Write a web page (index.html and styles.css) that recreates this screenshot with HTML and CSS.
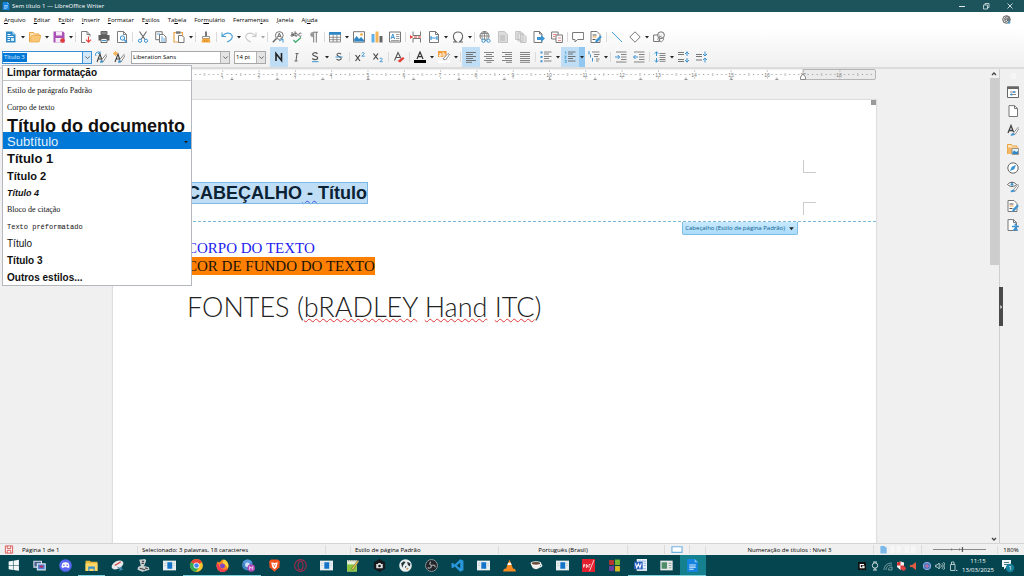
FILE: index.html
```html
<!DOCTYPE html>
<html lang="pt-BR">
<head>
<meta charset="utf-8">
<title>Sem título 1 — LibreOffice Writer</title>
<link rel="stylesheet" href="styles.css">
</head>
<body>
<svg class="sprite" aria-hidden="true">
  <symbol id="caret" viewBox="0 0 6 6"><path d="M1 2h4L3 4.4z" fill="#222"/></symbol>
  <symbol id="chev" viewBox="0 0 8 8"><path d="M1.500 2.800L4 5.300l2.500-2.500" fill="none" stroke="#555" stroke-width="1"/></symbol>
  <symbol id="new" viewBox="0 0 12 12"><path d="M1 .5h6.500L10.500 3.500v8H1z" fill="#2d8bc9"/><path d="M7.500.5v3h3z" fill="#a9d6f2"/><path d="M2.500 3.500h3M2.500 5.500h6M2.500 7.500h2.500M2.500 9.500h2.500" stroke="#fff"/><path d="M6 7h3v3H6z" fill="#d6ecf9"/></symbol>
  <symbol id="open" viewBox="0 0 12 12"><path d="M.5 10.500v-9h4l1 1.500h4.500v2" fill="#fbe3bd" stroke="#e8a33d"/><path d="M2.500 4.500h9.500l-2 6.500H.5z" fill="#f9c777" stroke="#e8a33d" stroke-width=".7"/></symbol>
  <symbol id="save" viewBox="0 0 12 12"><path d="M.5 .5h9.500l1.500 1.500v9.500H.5z" fill="#a850b5"/><path d="M3 .5h6v4H3zM2.500 7h7v4.500h-7z" fill="#f7eaf8"/><circle cx="9.500" cy="9.500" r="2.300" fill="#e23b3b"/></symbol>
  <symbol id="pdf" viewBox="0 0 12 12"><path d="M1.500.5h5.500l3 3v2M1.500.5v11h4" fill="#fff" stroke="#7d7d7d"/><path d="M7 .5v3h3" fill="none" stroke="#7d7d7d"/><path d="M5.500 6h5v5.500h-5z" fill="#fff"/><path d="M8.500 5.500v5.500M6 8.700l2.500 2.500L11 8.700" stroke="#e4403a" stroke-width="1.200" fill="none"/></symbol>
  <symbol id="print" viewBox="0 0 12 12"><path d="M3 .5h6v3H3z" fill="#888" stroke="#666"/><path d="M.5 4h11v5.500H.5z" fill="#5d5d5d"/><path d="M3 7.500h6v4H3z" fill="#f3f3f3" stroke="#666"/><path d="M4 9.500h4" stroke="#3c95d2"/></symbol>
  <symbol id="preview" viewBox="0 0 12 12"><path d="M1.500.5h6l3 3v8h-9z" fill="#fff" stroke="#7d7d7d"/><path d="M7.500.5v3h3" fill="none" stroke="#7d7d7d"/><circle cx="6.500" cy="7" r="2.200" fill="#e4f3fc" stroke="#3c95d2"/><path d="M8 8.500l3 3" stroke="#3c95d2" stroke-width="1.300"/></symbol>
  <symbol id="cut" viewBox="0 0 12 12"><path d="M2.500.5l5.500 8M9.500.5L4 8.500" stroke="#666" stroke-width="1.100"/><circle cx="3" cy="9.800" r="1.600" fill="none" stroke="#3c95d2"/><circle cx="9" cy="9.800" r="1.600" fill="none" stroke="#3c95d2"/></symbol>
  <symbol id="copy" viewBox="0 0 12 12"><path d="M.7 .7h6.500v8H.7z" fill="#fff" stroke="#777"/><path d="M4.500 3.500h4l2.500 2.500v5.500H4.500z" fill="#fff" stroke="#777"/><path d="M2 3h3M6 6h2M6 8h4M6 10h4" stroke="#3c95d2" stroke-width=".8"/></symbol>
  <symbol id="paste" viewBox="0 0 12 12"><path d="M1 1.500h8.500v9.500H1z" fill="#fff" stroke="#eba348" stroke-width="1.200"/><path d="M3 .3h4.500v2.500H3z" fill="#777"/><path d="M5.500 4.500h3.500l2 2v5H5.500z" fill="#fff" stroke="#777"/></symbol>
  <symbol id="clone" viewBox="0 0 12 12"><path d="M5 .5h2v5H5z" fill="#777"/><path d="M2.500 5.500h7v2h-7z" fill="#fff" stroke="#777" stroke-width=".8"/><path d="M2.500 7.500h7l1 4H1.500z" fill="#f3a63b"/><path d="M4.500 9v2M7 9v2" stroke="#c97b1b" stroke-width=".6"/></symbol>
  <symbol id="undo" viewBox="0 0 12 12"><path d="M1 1.500v4h4M1.300 5.300C4 1.500 9.500 1 11 4.500c1 2.500-1 5-5 6.500" fill="none" stroke="#4a9fd8" stroke-width="1.100"/></symbol>
  <symbol id="redo" viewBox="0 0 12 12"><path d="M11 1.500v4H7M10.700 5.300C8 1.500 2.500 1 1 4.500c-1 2.500 1 5 5 6.500" fill="none" stroke="#c9c9c9" stroke-width="1.100"/></symbol>
  <symbol id="find" viewBox="0 0 12 12"><circle cx="7.300" cy="4.500" r="3.900" fill="#fff" stroke="#777"/><path d="M5.300 6.700l2-4.500 2 4.500M6 5.300h2.600" fill="none" stroke="#555" stroke-width=".9"/><path d="M4.500 7.500L.8 11.300" stroke="#666" stroke-width="1.400"/><path d="M7 10l4-2v3.500" stroke="#3c95d2" fill="none"/></symbol>
  <symbol id="pilcrow" viewBox="0 0 12 12"><path d="M10 1.200H5M5.700 1v10.500M8.300 1v10.500" stroke="#777" fill="none"/><path d="M5.700 1C1 .5 1 6.500 5.700 6.200z" fill="#999"/></symbol>
  <symbol id="table" viewBox="0 0 12 12"><path d="M.5 1.500h11v9.500H.5zM.5 6.300h11M.5 8.700h11M4.200 4v7M7.900 4v7" fill="#fff" stroke="#777" stroke-width=".8"/><path d="M0 1h12v2.800H0z" fill="#2f86c5"/></symbol>
  <symbol id="image" viewBox="0 0 12 12"><path d="M.5 .7h11v10.500H.5z" fill="#fff" stroke="#777"/><path d="M1.200 10.500V8l2.500-3 2.300 3 2-2 3 3v1.500z" fill="#2f86c5"/><circle cx="8.500" cy="3.500" r="1.300" fill="#f3a63b"/></symbol>
  <symbol id="chart" viewBox="0 0 12 12"><path d="M.5 3h3v8.500h-3z" fill="#5fb0e6"/><path d="M4.500 .5h3v11h-3z" fill="#f3b75a"/><path d="M8.500 5h3v6.500h-3z" fill="#666"/></symbol>
  <symbol id="textbox" viewBox="0 0 12 12"><path d="M.5 1h11v10H.5z" fill="#fff" stroke="#777"/><path d="M2 8l1.800-5L5.600 8M2.600 6.500h2.400" fill="none" stroke="#3c95d2"/><path d="M7 3.500h3.500M7 5.500h3.500M7 7.500h3.500M2 9.500h8.500" stroke="#888" stroke-width=".8"/></symbol>
  <symbol id="break" viewBox="0 0 12 12"><path d="M3 .5v4h7.500v-4M3 11.500v-4h7.500v4" fill="none" stroke="#777"/><path d="M0 6h12" stroke="#e4403a" stroke-dasharray="3 1"/><path d="M0 4l2.500 2L0 8z" fill="#e4403a"/></symbol>
  <symbol id="field" viewBox="0 0 12 12"><path d="M1.500.5h6l3 3v8h-9z" fill="#fff" stroke="#777"/><path d="M7.500.5v3h3" fill="none" stroke="#777"/><path d="M3 5v4M9 5v4M3 7h6" stroke="#3c95d2" stroke-width="1.200"/></symbol>
  <symbol id="omega" viewBox="0 0 12 12"><path d="M1 11h3.500C-.5 7 1 1 6 1s6.500 6 1.500 10H11" fill="none" stroke="#666" stroke-width="1.100"/></symbol>
  <symbol id="link" viewBox="0 0 12 12"><circle cx="5.500" cy="5" r="4.500" fill="#fff" stroke="#777"/><path d="M1 5h9M2 2.500h7M5.500.5v9M5.500.5C2 3 2 7 5.500 9.500M5.500.5C9 3 9 7 5.500 9.500" fill="none" stroke="#777" stroke-width=".8"/><circle cx="4.500" cy="9.800" r="1.600" fill="#fff" stroke="#3c95d2"/><circle cx="9.500" cy="9.800" r="1.600" fill="#fff" stroke="#3c95d2"/></symbol>
  <symbol id="footnote" viewBox="0 0 12 12"><path d="M1.500.5h6l3 3v8h-9z" fill="#dcdcdc" stroke="#c4c4c4"/><path d="M3 5h5M3 7h5M3 9h5" stroke="#b4b4b4"/></symbol>
  <symbol id="endnote" viewBox="0 0 12 12"><path d="M.7 .5h5v8h-5zM3 2h5v8H3zM5.500 3.500h3.500l2 2v6H5.500z" fill="#e2e2e2" stroke="#c2c2c2"/></symbol>
  <symbol id="bookmark" viewBox="0 0 12 12"><path d="M1 .5h5.500L9 3v8.500H1z" fill="#fff" stroke="#777"/><path d="M6.500 .5v2.500H9" fill="none" stroke="#777"/><path d="M4 6h4V4l4 3.500L8 11V9H4z" fill="#3c95d2"/></symbol>
  <symbol id="xref" viewBox="0 0 12 12"><path d="M.6 1h6.500v7H.6z" fill="#fff" stroke="#777"/><path d="M5 4h6.400v7.500H5z" fill="#fff" stroke="#777"/><path d="M2 3.500h3.500M2 5.500h2M7 7h3M7 9.500h3" fill="none" stroke="#e98a86"/></symbol>
  <symbol id="comment" viewBox="0 0 12 12"><path d="M.6 1.500h11v7H5.500L3 11V8.500H.6z" fill="#fff" stroke="#777"/></symbol>
  <symbol id="track" viewBox="0 0 12 12"><path d="M1 .5h6l3 3v8H1z" fill="#fff" stroke="#777"/><path d="M2.500 4h4M2.500 8.500h3" stroke="#555"/><path d="M2.500 6h4" stroke="#f0a13a"/><path d="M5 11.500l.8-2.500 4.700-4.500 1.300 1.500L7.500 11z" fill="#3c95d2"/></symbol>
  <symbol id="line" viewBox="0 0 12 12"><path d="M1 1l10 10" stroke="#4a9fd8"/></symbol>
  <symbol id="diamond" viewBox="0 0 12 12"><path d="M6 .8L11.200 6 6 11.200.8 6z" fill="#fff" stroke="#777"/></symbol>
  <symbol id="shapes" viewBox="0 0 12 12"><path d="M.6 4h6v6.500h-6z" fill="#fff" stroke="#777"/><circle cx="8" cy="4.200" r="3.400" fill="#eee" fill-opacity=".7" stroke="#777"/><path d="M7 5l4 3-2.500 3L4.500 8.500z" fill="none" stroke="#777" stroke-width=".8"/></symbol>
  <symbol id="style-up" viewBox="0 0 12 12"><path d="M2 11l3-8 2.500 8M3 8h4" fill="none" stroke="#444" stroke-width="1.100"/><path d="M1 5a2.500 2.500 0 0 1 4-3M5 .3V2.500H3" fill="none" stroke="#3c95d2"/><path d="M6 9.500l5-6 1 1-4 6.500z" fill="#fff" stroke="#555" stroke-width=".7"/><path d="M5 11.700c0-2 1.500-3 3-2l-.5 2z" fill="#3c95d2"/></symbol>
  <symbol id="style-new" viewBox="0 0 12 12"><path d="M2 11l3-8 2.500 8M3 8h4" fill="none" stroke="#444" stroke-width="1.100"/><path d="M2.500 0v5M0 2.500h5M.8.8l3.400 3.400M4.200.8L.8 4.200" stroke="#f3a63b" stroke-width=".8"/><path d="M6 9.500l5-6 1 1-4 6.500z" fill="#fff" stroke="#555" stroke-width=".7"/><path d="M5 11.700c0-2 1.500-3 3-2l-.5 2z" fill="#3c95d2"/></symbol>
  <symbol id="bold" viewBox="0 0 12 12"><path d="M3 10V2.500l5.500 7V2" fill="none" stroke="#222" stroke-width="1.600"/></symbol>
  <symbol id="italic" viewBox="0 0 12 12"><path d="M4.500 2.500h3M3.500 10h3M6 2.500l-1 7.500" stroke="#666" stroke-width="1.100"/></symbol>
  <symbol id="under" viewBox="0 0 12 12"><path d="M8.500 2.800C7 1 3.500 1.500 3.700 3.500c.2 2 4.800 1.300 5 3.300C8.800 9 5 9.300 3.300 7.500" fill="none" stroke="#555" stroke-width="1.200"/><path d="M3 10.700h6.500" stroke="#3c95d2"/></symbol>
  <symbol id="strike" viewBox="0 0 12 12"><path d="M8 3.200C7 1.800 4 2 4 3.800c0 1.900 4 1.500 4.200 3.500C8.300 9.500 5 9.500 3.500 8.200" fill="none" stroke="#555" stroke-width="1.100"/><path d="M2.500 6h7" stroke="#3c95d2"/></symbol>
  <symbol id="sup" viewBox="0 0 12 12"><path d="M1.500 4l4.500 6M6 4l-4.500 6" stroke="#444" stroke-width="1.200"/><path d="M7.700 2.500c.5-1.500 3-1 2.500.5L7.800 5.200h3" fill="none" stroke="#3c95d2" stroke-width=".9"/></symbol>
  <symbol id="sub" viewBox="0 0 12 12"><path d="M1.500 2.500l4.500 6M6 2.500l-4.500 6" stroke="#444" stroke-width="1.200"/><path d="M7.700 8c.5-1.500 3-1 2.500.5L7.800 10.700h3" fill="none" stroke="#3c95d2" stroke-width=".9"/></symbol>
  <symbol id="clear" viewBox="0 0 12 12"><path d="M1.500 9.500L5 1.500l3 6M3 6.500h4" fill="none" stroke="#555" stroke-width="1.100"/><path d="M4.500 10L10 6l1.500 1.500-4.500 4z" fill="#e4403a"/></symbol>
  <symbol id="color" viewBox="0 0 12 12"><path d="M3 8l3-7 3 7M4 5.700h4" fill="none" stroke="#333" stroke-width="1.200"/><path d="M0 9h12v3H0z" fill="#000"/></symbol>
  <symbol id="left" viewBox="0 0 12 12"><path d="M1 1.500h10M1 3.500h7M1 5.500h10M1 7.500h7M1 9.500h10M1 11.300h6" stroke="#666" stroke-width=".9"/></symbol>
  <symbol id="center" viewBox="0 0 12 12"><path d="M1 1.500h10M3 3.500h6M1 5.500h10M3 7.500h6M1 9.500h10M3.500 11.300h5" stroke="#777" stroke-width=".9"/></symbol>
  <symbol id="right" viewBox="0 0 12 12"><path d="M1 1.500h10M4 3.500h7M1 5.500h10M4 7.500h7M1 9.500h10M5 11.300h6" stroke="#777" stroke-width=".9"/></symbol>
  <symbol id="just" viewBox="0 0 12 12"><path d="M1 1.500h10M1 3.500h10M1 5.500h10M1 7.500h10M1 9.500h10M1 11.300h10" stroke="#777" stroke-width=".9"/></symbol>
  <symbol id="bullets" viewBox="0 0 12 12"><path d="M4 1h7.500M4 3h5M4 5.500h7.500M4 7.500h5M4 10h7.500" stroke="#777" stroke-width=".9"/><path d="M.5 1.500h2M.5 6h2M.5 10.300h2" stroke="#3c95d2" stroke-width="2"/></symbol>
  <symbol id="numbers" viewBox="0 0 12 12"><path d="M4 1h7.500M4 3h5M4 5.500h7.500M4 7.500h5M4 10h7.500" stroke="#666" stroke-width=".9"/><path d="M1 .8h.8v2.200M.6 5h1.600L.8 7.200h1.600M.6 9.200h1.600v2.200H.6" fill="none" stroke="#3c95d2" stroke-width=".8"/></symbol>
  <symbol id="outline" viewBox="0 0 12 12"><path d="M4 1h7.500M6 3.500h5.500M6 5.500h4M8 8h3.500M8 10h2.500" stroke="#777" stroke-width=".9"/><path d="M1 0v3M2.500 3.500v3M4.500 7v3.500M.5 3h1" stroke="#3c95d2" stroke-width="1"/></symbol>
  <symbol id="indent" viewBox="0 0 12 12"><path d="M1 1h10.500M6 3.500h5.500M6 6h5.500M6 8.500h5.500M1 11h10.500" stroke="#777" stroke-width=".9"/><path d="M0 6h4.500M2.700 4l2 2-2 2" fill="none" stroke="#3c95d2"/></symbol>
  <symbol id="outdent" viewBox="0 0 12 12"><path d="M1 1h10.500M6 3.500h5.500M6 6h5.500M6 8.500h5.500M1 11h10.500" stroke="#777" stroke-width=".9"/><path d="M5 6H.5M2.500 4l-2 2 2 2" fill="none" stroke="#3c95d2"/></symbol>
  <symbol id="spacing" viewBox="0 0 12 12"><path d="M5.500 2.500h6M5.500 4.500h6M5.500 6.500h6M5.500 8.500h6M5.500 10.300h6" stroke="#777" stroke-width=".9"/><path d="M2.500 1v4M2.500 7v4M.7 2.700l1.800-2 1.800 2M.7 9.300l1.800 2 1.800-2" fill="none" stroke="#3c95d2"/></symbol>
  <symbol id="inc" viewBox="0 0 12 12"><path d="M0 1.500h6M0 3.500h6M0 8.500h6M0 10.500h6" stroke="#777" stroke-width="1.200"/><path d="M9 .5v4.500M9 7v4.500M7 3l2-2 2 2M7 9l2 2 2-2" fill="none" stroke="#3c95d2"/></symbol>
  <symbol id="dec" viewBox="0 0 12 12"><path d="M0 3.500h6M0 5.500h6M0 9h6" stroke="#777" stroke-width="1.200"/><path d="M9 .5v4.500M9 7v4.500M7 3l2 2 2-2M7 9l2-2 2 2" fill="none" stroke="#3c95d2"/></symbol>
  <symbol id="s-prop" viewBox="0 0 12 12"><path d="M.5 1h11v10.500H.5z" fill="#fff" stroke="#666"/><path d="M0 .5h12V3H0z" fill="#666"/><path d="M3 6h6M3 8.500h6" stroke="#888"/><path d="M7 5v2M4.500 7.500v2" stroke="#3c95d2" stroke-width="1.500"/></symbol>
  <symbol id="s-page" viewBox="0 0 12 12"><path d="M2 .6h5.500L10.500 3.500v8H2z" fill="#fff" stroke="#777"/><path d="M7.500.6v3h3" fill="none" stroke="#777"/></symbol>
  <symbol id="s-style" viewBox="0 0 12 12"><path d="M1 9l3-7.500L6.500 8M2 6.500h4" fill="none" stroke="#444" stroke-width="1.300"/><path d="M6 9.500l5-6 1 1-4 6z" fill="#fff" stroke="#666" stroke-width=".7"/><path d="M3.500 11.500c1-2.500 2.500-3 4.500-1.500-1 1.500-2.500 2-4.500 1.500z" fill="#3c95d2"/></symbol>
  <symbol id="s-gal" viewBox="0 0 12 12"><path d="M.5 11V1.500h4L5.500 3H10v1.500" fill="#fbe3bd" stroke="#e8a33d"/><path d="M.5 4.500h11V11H.5z" fill="#f5b765"/><path d="M5 5.500h6.500v6H5z" fill="#e4f3fc" stroke="#777" stroke-width=".7"/><path d="M5.500 11V9l2-1.500L9 9l2-1v3z" fill="#2f86c5"/></symbol>
  <symbol id="s-nav" viewBox="0 0 12 12"><circle cx="6" cy="6" r="5.200" fill="#fff" stroke="#666"/><path d="M9 3L7.300 7.300 3 9l1.700-4.300z" fill="#3c95d2"/></symbol>
  <symbol id="s-insp" viewBox="0 0 12 12"><path d="M.5 3.500c2.500-3 6.500-3 9 0-2.500 2.500-6.500 2.500-9 0z" fill="#fff" stroke="#555"/><circle cx="5" cy="3.300" r="1.400" fill="#3c95d2"/><path d="M6 9.500l5-6 1 1-4 6z" fill="#fff" stroke="#666" stroke-width=".7"/><path d="M3.500 11c1-2.500 2.500-3 4.500-1.500-1 1.500-2.500 2-4.500 1.500z" fill="#3c95d2"/></symbol>
  <symbol id="s-access" viewBox="0 0 12 12"><path d="M1 .6h5.500L9.500 3.500v8H1z" fill="#fff" stroke="#777"/><path d="M6.500.6v3h3" fill="none" stroke="#777"/><circle cx="8.500" cy="5.700" r="1.100" fill="#3c95d2"/><path d="M5 7.500h7M8.500 7v2.500M6.300 11.800L8.500 9l2.200 2.800" fill="none" stroke="#3c95d2" stroke-width="1.400"/></symbol>

  <symbol id="t-app" viewBox="0 0 12 12"><path d="M0 1.500h12v9H0z" fill="#e8eef0"/><path d="M4 3h4.500v6H4z" fill="#1273c9"/><path d="M1 4h2M1 6h2M9.500 4H11M9.500 6H11" stroke="#bcc7ca" stroke-width=".7"/></symbol>
  <symbol id="t-win" viewBox="0 0 12 12"><path d="M1.500 2.200L5.500 1.600v4h-4zM6 1.500l5-.7v4.800H6zM1.500 6.100h4v4l-4-.6zM6 6.100h5v4.800l-5-.7z" fill="#f4f8f9"/></symbol>
  <symbol id="t-view" viewBox="0 0 12 12"><path d="M.8 2h7v5.500h-7z" fill="#48628c" stroke="#d8dff0"/><path d="M4 4.500h7.300V10H4z" fill="#4b83d4" stroke="#dce6f5"/><path d="M6 6h3.500v2H6z" fill="#b02d63"/></symbol>
  <symbol id="t-discord" viewBox="0 0 12 12"><circle cx="6" cy="6" r="5.800" fill="#5865f2"/><path d="M3.500 3.500c1.500-.8 3.500-.8 5 0 .8 1.300 1.200 2.700 1.100 4L8.200 8.500l-.6-.9H4.400l-.6.9L2.400 7.500c-.1-1.300.3-2.700 1.100-4z" fill="#fff"/><path d="M4.500 5v1.500M7.500 5v1.500" stroke="#5865f2" stroke-width="1.200"/></symbol>
  <symbol id="t-folder" viewBox="0 0 12 12"><path d="M.5 1.500h4l1 1h6V11H.5z" fill="#e9b83d"/><path d="M.5 4h11v7H.5z" fill="#ffd968"/><path d="M3 7h6v4H8V9H4v2H3z" fill="#358fd0"/></symbol>
  <symbol id="t-disc" viewBox="0 0 12 12"><ellipse cx="6" cy="5.500" rx="5.800" ry="3.500" fill="#e8e9ea" transform="rotate(-28 6 5.500)"/><path d="M3.500 6l5.500-3.500" stroke="#cf4444" stroke-width="1.200"/><path d="M6 7.500l5 2.500M8 11l2-4" stroke="#4a91b8"/></symbol>
  <symbol id="t-tools" viewBox="0 0 12 12"><path d="M2 .8L7.500 0 8.500 1.500 6.500 6.500 11 7.500 11.500 10 5 11.800.5 10 .8 7.500 3.500 6z" fill="#c8cdce"/><path d="M4.500 2l2 .2M4.300 4h2M2.500 8.500l5 1.500M7.500 8.200l2.500.8" stroke="#394143"/></symbol>
  <symbol id="t-chrome" viewBox="0 0 12 12"><circle cx="6" cy="6" r="5.900" fill="#f7c52d"/><path d="M6 6L.9 3C3.200-.9 8.800-.9 11.100 3z" fill="#e84335"/><path d="M6 6L.9 3c-2.500 4.200.6 8.500 4.600 8.800L8 8z" fill="#34a853"/><circle cx="6" cy="6" r="2.800" fill="#fff"/><circle cx="6" cy="6" r="2.100" fill="#4285f4"/></symbol>
  <symbol id="t-fox" viewBox="0 0 12 12"><path d="M6 .5c2 1 2 1 3.500 1L11 4c2 4-1.500 8-5 8S-.5 8.500.7 4l1-2 1 1.500z" fill="#ff8a1e"/><path d="M7 .3c4 1.500 5.500 5.500 3.500 8.700C10 6 8 5 6 4z" fill="#ffd13d"/><path d="M1 4c-1.500 4 1.500 8 5 8 2.500 0 4.500-1.500 5-3.500C8 11 3 9.500 3 5z" fill="#f23b55"/><circle cx="6" cy="6.500" r="2.300" fill="#8046c8"/></symbol>
  <symbol id="t-chrome2" viewBox="0 0 12 12"><circle cx="5" cy="5.500" r="5" fill="#4285c4"/><path d="M5 5.500L.7 3C3-.5 7.500-.5 9.500 3z" fill="#5a9be0"/><circle cx="5" cy="5.500" r="2.200" fill="#cfe1f5"/><circle cx="8.500" cy="8.300" r="3.500" fill="#b146b6"/><path d="M7.100 10V7l1.400 1.500L9.900 7v3" fill="none" stroke="#fff" stroke-width=".7"/></symbol>
  <symbol id="t-brave" viewBox="0 0 12 12"><path d="M3 .5h6L11 2l-.5 5.500L6 11.800 1.500 7.500 1 2z" fill="#f4511e"/><path d="M3 3l3 .7L9 3l-1 4.500L6 9.500l-2-2z" fill="#fff"/><path d="M4.500 5l1 .7M7.500 5l-1 .7M6 6v1.500" stroke="#f4511e" stroke-width=".8"/></symbol>
  <symbol id="t-opera" viewBox="0 0 12 12"><circle cx="6" cy="6" r="5.400" fill="none" stroke="#a3284b"/><ellipse cx="6" cy="6" rx="2.300" ry="4" fill="none" stroke="#a3284b"/></symbol>
  <symbol id="t-npp" viewBox="0 0 12 12"><path d="M1 1h9v10.500H1z" fill="#e9f2da"/><path d="M1 5h9v6.500H1z" fill="#8ac53d"/><path d="M2 1.500h7" stroke="#777" stroke-dasharray="1 1"/><path d="M5 9l6-8 1 1-5.500 8z" fill="#f5c94a" stroke="#555" stroke-width=".5"/></symbol>
  <symbol id="t-cam" viewBox="0 0 12 12"><path d="M6 0l5.200 3v6L6 12 .8 9V3z" fill="#15181d"/><path d="M3 4.500h1.500L5 3.700h2l.5.800H9v4H3z" fill="#ddd"/><circle cx="6" cy="6.400" r="1.200" fill="#15181d"/></symbol>
  <symbol id="t-dog" viewBox="0 0 12 12"><circle cx="6" cy="6" r="5.800" fill="#e9efef"/><path d="M2 4l2.500-2L6 3 4 5.500 3 8zM7.500 2.500l3 1.500-.3 3-2-1.500zM5.500 6.500L7 7 6 8.500z" fill="#23343a"/><circle cx="7.800" cy="9" r="1" fill="#c79a6a"/></symbol>
  <symbol id="t-obs" viewBox="0 0 12 12"><circle cx="6" cy="6" r="5.500" fill="#22252a" stroke="#aab0b3" stroke-width=".7"/><path d="M6 6c-2-1-2-2.500-.5-3.500M6 6c2-1 3.500 0 3.500 1.500M6 6c0 2-1.500 3-3.500 2" fill="none" stroke="#9ba0a3" stroke-width="1.200"/></symbol>
  <symbol id="t-code" viewBox="0 0 12 12"><path d="M8.500.3l3 1.300v8.800l-3 1.300L3.500 7l-2 1.600-1-.6V4l1-.6 2 1.600zM8.500 3.500L5.300 6l3.200 2.500z" fill="#2a96dc" fill-rule="evenodd"/></symbol>
  <symbol id="t-vlc" viewBox="0 0 12 12"><path d="M6 .5l3.500 9h-7z" fill="#f58a1f"/><path d="M4.800 3.500h2.400l.8 2H4z" fill="#fff"/><path d="M1 9h10l1 2.500H0z" fill="#f58a1f"/></symbol>
  <symbol id="t-java" viewBox="0 0 12 12"><path d="M1 4h9c0 3-2 5.500-4.500 5.500S1 7 1 4z" fill="#f1efec"/><ellipse cx="5.500" cy="4" rx="5" ry="2" fill="#fff"/><ellipse cx="5.500" cy="4" rx="4" ry="1.300" fill="#6a4938"/><path d="M9.500 5c2.500 0 1.500 2.500-1 2.500" fill="none" stroke="#fff"/></symbol>
  <symbol id="t-pdf" viewBox="0 0 12 12"><path d="M0 0h12v12H0z" fill="#e31e2d"/><path d="M1.500 8V5h1v1.500h-1M4 5v3c1.500 0 1.500-3 0-3M6.500 8V5H8" fill="none" stroke="#fff" stroke-width=".7"/><path d="M11 1L7 11" stroke="#fff" stroke-width=".7"/></symbol>
  <symbol id="t-rgb" viewBox="0 0 12 12"><path d="M1 1h4.500v4.500H1z" fill="#b8352f"/><path d="M6.500 .5H11v5H6.500z" fill="#77b72f"/><path d="M1 6.500h4.500V11H1z" fill="#6a3fa0"/><path d="M6.500 6.500H11v5H6.500z" fill="#d9b921"/></symbol>
  <symbol id="t-word" viewBox="0 0 12 12"><path d="M2.500 0H12v11H2.500z" fill="#eaf1fb"/><path d="M4 2h7M4 9h7M9 4h2M9 6h2" stroke="#7ba2dc" stroke-width=".7"/><path d="M0 2.500h8v7H0z" fill="#2a62bd"/><path d="M1.300 4l1.200 4L4 4.500 5.500 8l1.200-4" fill="none" stroke="#fff"/></symbol>
  <symbol id="t-grid" viewBox="0 0 12 12"><path d="M.3 1.500h11.400v9H.3z" fill="#e7e9e7"/><path d="M1.500 3h5v6h-5z" fill="#4e8c6a"/><path d="M8 4h2.500M8 6h2.500M8 8h2.500" stroke="#9aa"/></symbol>
  <symbol id="t-writer" viewBox="0 0 12 12"><path d="M1 0h7l3 3v9H1z" fill="#1584e0"/><path d="M8 0v3h3z" fill="#7cc0f5"/><path d="M3 5.500h6M3 7.500h6M3 9.500h4" stroke="#d5ebfb"/></symbol>
  <symbol id="y-g" viewBox="0 0 10 10"><path d="M1 1h8v8H1z" fill="#111"/><path d="M7 3.500H3.300v3.300H7V5.200H5" fill="none" stroke="#fff" stroke-width="1.100"/></symbol>
  <symbol id="y-cam" viewBox="0 0 10 10"><circle cx="5" cy="4.500" r="2.700" fill="none" stroke="#cfe0e2"/><path d="M3 9h4M5 7v2M3 1h4" stroke="#cfe0e2"/></symbol>
  <symbol id="y-net" viewBox="0 0 10 10"><path d="M1 9c0-4 3-7 8-7M3 9c0-3 2-5 6-5M5.500 9c0-2 1-3 3.500-3V9z" fill="none" stroke="#8fb1b5" stroke-width=".8"/></symbol>
  <symbol id="y-shield" viewBox="0 0 10 10"><path d="M1 1.500L4.500.5 8 1.500v4L4.500 9 1 6z" fill="#f2f2f2"/><path d="M4.500.5v4H1v-3zM8 4.500v1L4.500 9V4.500z" fill="#d63333"/><circle cx="7.500" cy="7.500" r="2.300" fill="#e04141"/></symbol>
  <symbol id="y-red" viewBox="0 0 10 10"><path d="M1 4h2l4-3v8L3 6H1z" fill="#dd5c43"/></symbol>
  <symbol id="y-blue" viewBox="0 0 10 10"><circle cx="5" cy="5" r="3.700" fill="#3f74c7" stroke="#8cb0e2"/><path d="M5 2.500v5M2.500 5h5" stroke="#d9738f"/></symbol>
  <symbol id="y-vol" viewBox="0 0 10 10"><path d="M.7 4h1.500l2-2v6l-2-2H.7zM5.500 3.500c1 1 1 2 0 3M7 2.200c1.500 1.600 1.500 4 0 5.600M8.500 1.200c2 2.200 2 5.400 0 7.600" fill="none" stroke="#d5e4e6" stroke-width=".8"/></symbol>
  <symbol id="y-usb" viewBox="0 0 10 10"><path d="M2.500 3.500h4.500V9.500H2.500zM3.500 1h2.500v2.500M3.500 1v2.500M8 9.500h1.500" fill="none" stroke="#d5e4e6" stroke-width=".8"/></symbol>
</svg>

<div class="window">
  <header class="titlebar">
    <svg class="app-icon"><use href="#t-writer"/></svg>
    <h1>Sem título 1 — LibreOffice Writer</h1>
    <div class="win-buttons">
      <button aria-label="Minimizar"><svg viewBox="0 0 8 8"><path d="M1 4.500h6" stroke="#dce8ea"/></svg></button>
      <button aria-label="Restaurar"><svg viewBox="0 0 8 8"><path d="M1.500 3h4v4h-4zM3 3V1.500h4v4H5.500" fill="none" stroke="#dce8ea" stroke-width=".8"/></svg></button>
      <button aria-label="Fechar"><svg viewBox="0 0 8 8"><path d="M1.500 1.500l5 5M6.500 1.500l-5 5" stroke="#dce8ea" stroke-width=".9"/></svg></button>
    </div>
  </header>

  <div class="chrome">
    <nav class="menubar">
      <button><u>A</u>rquivo</button><button><u>E</u>ditar</button><button>E<u>x</u>ibir</button><button><u>I</u>nserir</button><button><u>F</u>ormatar</button><button>E<u>s</u>tilos</button><button>Ta<u>b</u>ela</button><button>For<u>m</u>ulário</button><button>Ferramen<u>t</u>as</button><button><u>J</u>anela</button><button>Aj<u>u</u>da</button>
      <button class="update" aria-label="Atualização disponível"><svg viewBox="0 0 9 9"><circle cx="4.500" cy="4.500" r="3.800" fill="#ddd" stroke="#666"/><path d="M6 3v3c2 .5 1.500-3 0-4S2 3 3 5.500s3 0 3-1-2.500-1-2.500.5" fill="none" stroke="#444" stroke-width=".8"/><path d="M7 5.500v3M5.700 7.200L7 8.500l1.300-1.300" fill="none" stroke="#3c95d2"/></svg></button>
    </nav>

    <div class="toolbar" role="toolbar" aria-label="Padrão">
      <div class="group">
        <button class="tool" aria-label="Novo"><svg><use href="#new"/></svg></button><button class="drop" aria-label="Opções de novo"><svg><use href="#caret"/></svg></button>
        <button class="tool" aria-label="Abrir"><svg><use href="#open"/></svg></button><button class="drop" aria-label="Recentes"><svg><use href="#caret"/></svg></button>
        <button class="tool" aria-label="Salvar"><svg><use href="#save"/></svg></button><button class="drop" aria-label="Opções de salvar"><svg><use href="#caret"/></svg></button>
      </div>
      <div class="group">
        <button class="tool" aria-label="Exportar PDF"><svg><use href="#pdf"/></svg></button>
        <button class="tool" aria-label="Imprimir"><svg><use href="#print"/></svg></button>
        <button class="tool" aria-label="Visualizar"><svg><use href="#preview"/></svg></button>
      </div>
      <div class="group">
        <button class="tool" aria-label="Cortar"><svg><use href="#cut"/></svg></button>
        <button class="tool" aria-label="Copiar"><svg><use href="#copy"/></svg></button>
        <button class="tool" aria-label="Colar"><svg><use href="#paste"/></svg></button><button class="drop" aria-label="Opções de colar"><svg><use href="#caret"/></svg></button>
      </div>
      <div class="group">
        <button class="tool" aria-label="Clonar formatação"><svg><use href="#clone"/></svg></button>
      </div>
      <div class="group">
        <button class="tool" aria-label="Desfazer"><svg><use href="#undo"/></svg></button><button class="drop" aria-label="Histórico"><svg><use href="#caret"/></svg></button>
        <button class="tool" aria-label="Refazer"><svg><use href="#redo"/></svg></button><button class="drop faded" aria-label="Histórico de refazer"><svg><use href="#caret"/></svg></button>
      </div>
      <div class="group">
        <button class="tool" aria-label="Localizar"><svg><use href="#find"/></svg></button>
        <button class="tool" aria-label="Ortografia"><svg viewBox="0 0 12 12"><path d="M1 2.300c1-.8 2.300-.5 2.300.7v2M3.300 3.500C.5 3.300.5 5.200 2 5.200c.8 0 1.300-.6 1.300-1M5 .3v4.900M5 3c.5-1.300 2.300-1 2.300.7S5.500 5.600 5 4.500M11.300 2.500c-1.300-1-2.500 0-2.500 1.200s1.200 2.200 2.500 1.200" fill="none" stroke="#444" stroke-width=".9"/><path d="M3.500 9l2 2.300L11 6.500" fill="none" stroke="#35a867" stroke-width="1.200"/></svg></button>
        <button class="tool" aria-label="Marcas de formatação"><svg><use href="#pilcrow"/></svg></button>
      </div>
      <div class="group">
        <button class="tool" aria-label="Tabela"><svg><use href="#table"/></svg></button><button class="drop" aria-label="Tamanho da tabela"><svg><use href="#caret"/></svg></button>
        <button class="tool" aria-label="Imagem"><svg><use href="#image"/></svg></button>
        <button class="tool" aria-label="Gráfico"><svg><use href="#chart"/></svg></button>
        <button class="tool" aria-label="Caixa de texto"><svg><use href="#textbox"/></svg></button>
      </div>
      <div class="group">
        <button class="tool" aria-label="Quebra de página"><svg><use href="#break"/></svg></button>
        <button class="tool" aria-label="Campo"><svg><use href="#field"/></svg></button><button class="drop" aria-label="Campos"><svg><use href="#caret"/></svg></button>
        <button class="tool" aria-label="Caractere especial"><svg><use href="#omega"/></svg></button><button class="drop" aria-label="Caracteres"><svg><use href="#caret"/></svg></button>
      </div>
      <div class="group">
        <button class="tool" aria-label="Hiperlink"><svg><use href="#link"/></svg></button>
        <button class="tool" aria-label="Nota de rodapé"><svg><use href="#footnote"/></svg></button>
        <button class="tool" aria-label="Nota de fim"><svg><use href="#endnote"/></svg></button>
        <button class="tool" aria-label="Marcador"><svg><use href="#bookmark"/></svg></button>
        <button class="tool" aria-label="Referência cruzada"><svg><use href="#xref"/></svg></button>
      </div>
      <div class="group">
        <button class="tool" aria-label="Anotação"><svg><use href="#comment"/></svg></button>
        <button class="tool" aria-label="Registrar alterações"><svg><use href="#track"/></svg></button>
      </div>
      <div class="group">
        <button class="tool" aria-label="Linha"><svg><use href="#line"/></svg></button>
        <button class="tool" aria-label="Formas"><svg><use href="#diamond"/></svg></button><button class="drop" aria-label="Mais formas"><svg><use href="#caret"/></svg></button>
        <button class="tool" aria-label="Funções de desenho"><svg><use href="#shapes"/></svg></button>
      </div>
    </div>

    <div class="toolbar" role="toolbar" aria-label="Formatação">
      <div class="fields">
        <div class="combo style-combo">
          <input type="text" value="Título 3" aria-label="Estilo de parágrafo">
          <button aria-label="Abrir estilos"><svg><use href="#chev"/></svg></button>
          <ul class="style-list" role="listbox" aria-label="Estilos">
            <li class="clear-item">Limpar formatação</li>
            <li class="serif">Estilo de parágrafo Padrão</li>
            <li class="serif">Corpo de texto</li>
            <li class="doc-title">Título do documento</li>
            <li class="subtitle" role="option" aria-selected="true">Subtítulo<svg><use href="#caret"/></svg></li>
            <li class="h1">Título 1</li>
            <li class="h2">Título 2</li>
            <li class="h4">Título 4</li>
            <li class="serif">Bloco de citação</li>
            <li class="mono">Texto préformatado</li>
            <li class="plain">Título</li>
            <li class="h3">Título 3</li>
            <li class="more">Outros estilos...</li>
          </ul>
        </div>
        <div class="style-tools">
          <button class="tool" aria-label="Atualizar estilo"><svg><use href="#style-up"/></svg></button>
          <button class="tool" aria-label="Novo estilo"><svg><use href="#style-new"/></svg></button>
        </div>
        <div class="combo font-combo"><input type="text" value="Liberation Sans" aria-label="Fonte"><button aria-label="Fontes"><svg><use href="#chev"/></svg></button></div>
        <div class="combo size-combo"><input type="text" value="14 pt" aria-label="Tamanho"><button aria-label="Tamanhos"><svg><use href="#chev"/></svg></button></div>
      </div>
      <div class="group">
        <button class="tool on" aria-label="Negrito"><svg><use href="#bold"/></svg></button>
        <button class="tool" aria-label="Itálico"><svg><use href="#italic"/></svg></button>
        <button class="tool" aria-label="Sublinhado"><svg><use href="#under"/></svg></button><button class="drop" aria-label="Tipos de sublinhado"><svg><use href="#caret"/></svg></button>
        <button class="tool" aria-label="Tachado"><svg><use href="#strike"/></svg></button>
      </div>
      <div class="group">
        <button class="tool" aria-label="Sobrescrito"><svg><use href="#sup"/></svg></button>
        <button class="tool" aria-label="Subscrito"><svg><use href="#sub"/></svg></button>
      </div>
      <div class="group"><button class="tool" aria-label="Limpar formatação direta"><svg><use href="#clear"/></svg></button></div>
      <div class="group">
        <button class="tool" aria-label="Cor da fonte"><svg><use href="#color"/></svg></button><button class="drop" aria-label="Cores da fonte"><svg><use href="#caret"/></svg></button>
        <button class="tool" aria-label="Realce"><svg viewBox="0 0 12 12"><path d="M0 0h8.500v6H0z" fill="#f39a35"/><path d="M1.300 2.700h1.800v2.500H1.300V4h1.800M5 .8v4.400h2V2.900H5" fill="none" stroke="#fff" stroke-width=".8"/><path d="M5 8l5-5.500 1.500 1L7.500 9z" fill="#fff" stroke="#666" stroke-width=".7"/><path d="M0 9.500h12V12H0z" fill="#fff"/></svg></button><button class="drop" aria-label="Cores de realce"><svg><use href="#caret"/></svg></button>
      </div>
      <div class="group">
        <button class="tool on" aria-label="Alinhar à esquerda"><svg><use href="#left"/></svg></button>
        <button class="tool" aria-label="Centralizar"><svg><use href="#center"/></svg></button>
        <button class="tool" aria-label="Alinhar à direita"><svg><use href="#right"/></svg></button>
        <button class="tool" aria-label="Justificar"><svg><use href="#just"/></svg></button>
      </div>
      <div class="group">
        <button class="tool" aria-label="Marcadores"><svg><use href="#bullets"/></svg></button><button class="drop" aria-label="Tipos de marcador"><svg><use href="#caret"/></svg></button>
        <button class="tool on" aria-label="Numeração"><svg><use href="#numbers"/></svg></button><button class="drop on-drop" aria-label="Tipos de numeração"><svg><use href="#caret"/></svg></button>
        <button class="tool" aria-label="Estrutura"><svg><use href="#outline"/></svg></button><button class="drop" aria-label="Formatos de estrutura"><svg><use href="#caret"/></svg></button>
      </div>
      <div class="group">
        <button class="tool" aria-label="Aumentar recuo"><svg><use href="#indent"/></svg></button>
        <button class="tool" aria-label="Diminuir recuo"><svg><use href="#outdent"/></svg></button>
      </div>
      <div class="group">
        <button class="tool" aria-label="Entrelinhas"><svg><use href="#spacing"/></svg></button><button class="drop" aria-label="Opções de entrelinhas"><svg><use href="#caret"/></svg></button>
        <button class="tool" aria-label="Aumentar espaçamento"><svg><use href="#inc"/></svg></button>
        <button class="tool" aria-label="Diminuir espaçamento"><svg><use href="#dec"/></svg></button>
      </div>
    </div>
  </div>

  <div class="workspace">
    <main class="canvas">
      <svg class="ruler" viewBox="0 0 763 12" aria-label="Régua">
        <defs>
          <pattern id="ticks" x="73" y="0" width="36.3" height="12" patternUnits="userSpaceOnUse">
            <path d="M4.500 5.500h1M9 5.500h1M13.500 5.500h1M22.500 5.500h1M27 5.500h1M31.500 5.500h1" stroke="#8d8d8d"/>
            <path d="M18.500 4v3" stroke="#999" stroke-width=".8"/>
            <path d="M.5 1v2M.5 8v2" stroke="#bbb" stroke-width=".8"/>
          </pattern>
          <pattern id="tabs" x="82.500" y="0" width="45.400" height="12" patternUnits="userSpaceOnUse"><path d="M35 10.500h3M36.500 8.500v2" stroke="#888" stroke-width=".9"/></pattern>
        </defs>
        <path d="M0 1h690v10H0z" fill="#fff"/>
        <path d="M690 .5h71q1.500 0 1.500 1.500v7q0 1.500-1.500 1.500h-71z" fill="#ebebeb" stroke="#b5b5b5"/>
        <path d="M73 0h686v12H73z" fill="url(#ticks)"/>
        <path d="M82 0h600v12H82z" fill="url(#tabs)"/>
        <g class="ruler-numbers"><text x="109" y="8">1</text><text x="146" y="8">2</text><text x="182" y="8">3</text><text x="218" y="8">4</text><text x="255" y="8">5</text><text x="291" y="8">6</text><text x="327" y="8">7</text><text x="363" y="8">8</text><text x="400" y="8">9</text><text x="436" y="8">10</text><text x="472" y="8">11</text><text x="509" y="8">12</text><text x="545" y="8">13</text><text x="581" y="8">14</text><text x="618" y="8">15</text><text x="654" y="8">16</text><text x="690" y="8">17</text><text x="726" y="8">18</text></g>
        <path d="M690 5l2.500 3v2.500h-5V8z" fill="#fff" stroke="#888"/>
      </svg>
      <article class="page">
        <i class="crop crop-bottom"></i><i class="crop crop-top"></i><i class="anchor"></i>
        <header class="page-header"><h2><mark>CABEÇALHO<span class="grammar"> - </span>Título</mark></h2></header>
        <button class="header-tab">Cabeçalho (Estilo de página Padrão)<svg><use href="#caret"/></svg></button>
        <section class="page-body">
          <p class="blue">CORPO DO TEXTO</p>
          <p><span class="orange">COR DE FUNDO DO TEXTO</span></p>
          <p class="hand">FONTES (<span>bRADLEY</span> <span>Hand</span> <span>ITC</span>)</p>
        </section>
      </article>
    </main>
    <div class="scrollbar">
      <button aria-label="Rolar para cima"><svg viewBox="0 0 8 8"><path d="M2 5l2-2 2 2" fill="none" stroke="#444" stroke-width="1.300"/></svg></button>
      <div class="track"><div class="thumb"></div></div>
      <button aria-label="Rolar para baixo"><svg viewBox="0 0 8 8"><path d="M2 3l2 2 2-2" fill="none" stroke="#444" stroke-width="1.300"/></svg></button>
    </div>
    <aside class="sidebar">
      <i class="handle"><svg viewBox="0 0 3 6"><path d="M1 1.500L2.500 3 1 4.500z" fill="#ddd"/></svg></i>
      <button aria-label="Configurações da barra lateral"><svg viewBox="0 0 12 12"><path d="M4 4h5M4 6h5M4 8h5" stroke="#fafafa"/></svg></button>
      <button aria-label="Propriedades"><svg><use href="#s-prop"/></svg></button>
      <button aria-label="Página"><svg><use href="#s-page"/></svg></button>
      <button aria-label="Estilos"><svg><use href="#s-style"/></svg></button>
      <button aria-label="Galeria"><svg><use href="#s-gal"/></svg></button>
      <button aria-label="Navegador"><svg><use href="#s-nav"/></svg></button>
      <button aria-label="Inspetor de estilos"><svg><use href="#s-insp"/></svg></button>
      <button aria-label="Gerenciar alterações"><svg><use href="#track"/></svg></button>
      <button aria-label="Verificação de acessibilidade"><svg><use href="#s-access"/></svg></button>
    </aside>
  </div>

  <footer class="statusbar">
    <span class="st-save"><svg viewBox="0 0 10 10"><path d="M1 1h8v8H1zM3 1v3h4V1M3 9V6h4v3" fill="#fff" stroke="#d9534f"/></svg></span>
    <span class="st-page">Página 1 de 1</span>
    <span class="st-words">Selecionado: 3 palavras, 18 caracteres</span>
    <span class="st-gap"></span>
    <span class="st-style">Estilo de página Padrão</span>
    <span class="st-lang">Português (Brasil)</span>
    <span class="st-gap wide"></span>
    <span class="st-mode"><svg viewBox="0 0 10 8"><path d="M.5 1.500h9v5h-9z" fill="#fff" stroke="#6fb2e0"/></svg></span>
    <span class="st-sign"></span>
    <span class="st-outline">Numeração de títulos : Nível 3</span>
    <span class="st-views"><svg viewBox="0 0 46 10"><path d="M4 1h4l3 2v6.500H4z" fill="#7db9e8"/><path d="M15 1h5v8h-5zM22 1h5v8h-5zM31 1h5v8h-5zM38 1h5v8h-5z" fill="#f6f6f6"/></svg></span>
    <span class="st-zoom"><svg viewBox="0 0 54 6"><path d="M0 3h54" stroke="#888"/><path d="M19 2v2M27 2v2" stroke="#777"/><path d="M30 .5v5" stroke="#555" stroke-width="1.300"/></svg></span>
    <span class="st-pct">180%</span>
  </footer>
</div>

<footer class="taskbar">
  <div class="apps">
    <button aria-label="Iniciar"><svg><use href="#t-win"/></svg></button>
    <button aria-label="Visão de tarefas"><svg><use href="#t-view"/></svg></button>
    <button aria-label="Discord"><svg><use href="#t-discord"/></svg></button>
    <button class="open" aria-label="Explorador"><svg><use href="#t-folder"/></svg></button>
    <button aria-label="Captura"><svg><use href="#t-disc"/></svg></button>
    <button aria-label="Ferramentas"><svg><use href="#t-tools"/></svg></button>
    <button aria-label="Aplicativo"><svg><use href="#t-app"/></svg></button>
    <button class="open" aria-label="Chrome"><svg><use href="#t-chrome"/></svg></button>
    <button class="open" aria-label="Firefox"><svg><use href="#t-fox"/></svg></button>
    <button class="open" aria-label="Chrome, perfil M"><svg><use href="#t-chrome2"/></svg></button>
    <button aria-label="Brave"><svg><use href="#t-brave"/></svg></button>
    <button aria-label="Opera"><svg><use href="#t-opera"/></svg></button>
    <button aria-label="Aplicativo"><svg><use href="#t-app"/></svg></button>
    <button aria-label="Notepad++"><svg><use href="#t-npp"/></svg></button>
    <button aria-label="Câmera"><svg><use href="#t-cam"/></svg></button>
    <button aria-label="Mascote"><svg><use href="#t-dog"/></svg></button>
    <button aria-label="OBS"><svg><use href="#t-obs"/></svg></button>
    <button aria-label="VS Code"><svg><use href="#t-code"/></svg></button>
    <button aria-label="Aplicativo"><svg><use href="#t-app"/></svg></button>
    <button aria-label="VLC"><svg><use href="#t-vlc"/></svg></button>
    <button aria-label="Java"><svg><use href="#t-java"/></svg></button>
    <button aria-label="Aplicativo"><svg><use href="#t-app"/></svg></button>
    <button aria-label="PDF"><svg><use href="#t-pdf"/></svg></button>
    <button aria-label="Blocos"><svg><use href="#t-rgb"/></svg></button>
    <button class="open" aria-label="Word"><svg><use href="#t-word"/></svg></button>
    <button class="open" aria-label="Planilha"><svg><use href="#t-grid"/></svg></button>
    <button class="open active" aria-label="LibreOffice Writer"><svg><use href="#t-writer"/></svg></button>
  </div>
  <div class="tray">
    <div class="tray-icons">
      <svg><use href="#y-g"/></svg><svg><use href="#y-cam"/></svg><svg><use href="#y-net"/></svg><svg><use href="#y-shield"/></svg><svg><use href="#y-red"/></svg><svg><use href="#y-blue"/></svg><svg><use href="#y-vol"/></svg><svg><use href="#y-usb"/></svg>
    </div>
    <time class="clock">11:15<br>13/03/2025</time>
    <button class="notify" aria-label="Notificações"><svg viewBox="0 0 14 14"><path d="M1 1h9v7H5.500L3 10.500V8H1z" fill="#f0f6f7"/><path d="M3 3.500h5M3 5.500h5" stroke="#15596a" stroke-width=".8"/><circle cx="9" cy="9" r="4.200" fill="#15809a"/></svg><span>1</span></button>
  </div>
</footer>
</body>
</html>
```
FILE: styles.css
```css
* { box-sizing: border-box; }
body {
  margin: 0;
  height: 100vh;
  display: flex;
  flex-direction: column;
  overflow: hidden;
  font: 6px/8px "Open Sans", "Noto Sans", sans-serif;
  color: #000;
  background: #f0f0f0;
}
button, input {
  font: inherit;
  color: inherit;
  padding: 0;
  margin: 0;
  border: 0;
  background: none;
  min-width: 0;
}
button { display: inline-flex; align-items: center; justify-content: center; }
svg { display: block; flex: none; }
.sprite { position: absolute; width: 0; height: 0; }

.window { flex: 1; min-height: 0; display: flex; flex-direction: column; }

/* Title bar */
.titlebar {
  display: flex;
  align-items: center;
  height: 12px;
  padding-left: 2px;
  gap: 2px;
  background: #1d545c;
  color: #fff;
}
.titlebar h1 { margin: 0; font: inherit; }
.app-icon { width: 8px; height: 8px; }
.win-buttons { margin-left: auto; display: flex; padding-right: 2px; }
.win-buttons button { width: 24px; height: 12px; }
.win-buttons svg { width: 8px; height: 8px; }

/* Menus and toolbars */
.chrome {
  border-bottom: 2px solid #dcdcdc;
  background: linear-gradient(#fff 30%, #f0f0f0);
}
.menubar { display: flex; height: 15px; padding: 0 13px 0 4px; gap: 8px; }
.menubar u { text-underline-offset: 1px; text-decoration-thickness: 1px; }
.update { margin-left: auto; }
.update svg { width: 9px; height: 9px; }
.toolbar { display: flex; height: 20px; gap: 1px; }
.group { display: flex; padding-left: 2px; position: relative; }
.group + .group::before {
  content: "";
  position: absolute;
  left: 0;
  top: 5px;
  height: 10px;
  border-left: 1px solid #dadada;
}
.tool { width: 18px; height: 20px; }
.tool svg { width: 12px; height: 12px; }
.drop { width: 6px; height: 20px; }
.drop svg { width: 6px; height: 6px; }
.faded { opacity: .4; }
.on { background: #bfdef5; }
.on-drop { background: #92c8f0; }

.fields { display: flex; align-items: center; width: 267px; padding-left: 2px; }
.combo {
  display: flex;
  height: 13px;
  border: 1px solid #a8a8a8;
  background: #fff;
}
.combo input { flex: 1; padding-left: 1px; }
.combo button { width: 9px; background: #e4e4e4; border-left: 1px solid #b5b5b5; }
.combo svg { width: 7px; height: 7px; }
.style-combo { position: relative; width: 90px; border-color: #3b8fd6; justify-content: space-between; }
.style-combo > input { flex: none; width: 24px; height: 9px; align-self: center; background: #0078d7; color: #e6f3fd; }
.style-combo > button { background: #d3e8f8; border-color: #3b8fd6; }
.style-tools { display: flex; width: 39px; }
.font-combo { width: 99px; margin-right: 4px; }
.size-combo { width: 32px; }

/* Paragraph style list */
.style-list {
  position: absolute;
  z-index: 5;
  top: 13px;
  left: -1px;
  width: 190px;
  margin: 0;
  padding: 0;
  list-style: none;
  background: #fff;
  border: 1px solid #b4b7bd;
  font-family: "Liberation Sans", Arial, sans-serif;
  color: #111;
}
.style-list li {
  display: flex;
  align-items: center;
  height: 17px;
  padding: 3px 0 0 4px;
  white-space: nowrap;
}
.style-list .clear-item { height: 15px; padding-top: 0; border-bottom: 1px solid #c4c4c4; font-weight: 700; font-size: 10px; }
.style-list .serif { font-family: "Liberation Serif", "Times New Roman", serif; font-size: 8px; }
.style-list .doc-title { align-items: flex-start; font-size: 18px; line-height: 16px; font-weight: 700; }
.style-list .subtitle { justify-content: space-between; padding-right: 2px; font-size: 13px; background: #0078d7; color: #e3f1fc; }
.subtitle svg { width: 6px; height: 6px; }
.style-list .h1 { font-size: 13px; font-weight: 700; }
.style-list .h2 { font-size: 11px; font-weight: 700; }
.style-list .h3 { font-size: 10px; font-weight: 700; }
.style-list .h4 { font-size: 9px; font-weight: 700; font-style: italic; }
.style-list .mono { font-family: "Liberation Mono", monospace; font-size: 7px; }
.style-list .plain { font-size: 10px; }
.style-list .more { font-size: 10px; font-weight: 700; }

/* Document area */
.workspace { flex: 1; min-height: 0; display: flex; }
.canvas { flex: 1; min-width: 0; display: flex; flex-direction: column; padding: 0 113px; overflow: hidden; }
.ruler { width: 100%; margin-bottom: 19px; }
.ruler-numbers text { font: 5px "Liberation Sans", sans-serif; fill: #777; text-anchor: middle; }
.page {
  position: relative;
  flex: 1;
  background: #fff;
  box-shadow: 0 0 1px 1px #dedede;
}
.page-header { height: 122px; padding: 83px 0 0 74px; border-bottom: 1px dashed #7ab9dd; }
.page-header h2 { margin: 0; font: 700 18px/20px "Liberation Sans", Arial, sans-serif; }
.page-header mark { display: inline-block; background: #bfdef5; outline: 1px solid #7db9e8; color: #0b2234; }
.grammar { text-decoration: underline wavy #3c50e0 1px; text-underline-offset: 1px; text-decoration-skip-ink: none; white-space: pre; }
.header-tab {
  position: absolute;
  top: 122px;
  right: 78px;
  height: 13px;
  padding: 0 2px;
  gap: 3px;
  border: 1px solid #7cbfe6;
  border-top: 0;
  border-radius: 0 0 2px 2px;
  background: linear-gradient(#c9eaff, #a9dbf8);
  color: #0f6090;
}
.header-tab svg { width: 7px; height: 7px; }
.crop { position: absolute; right: 60px; width: 13px; height: 13px; border-left: 1px solid #ccc; }
.crop-bottom { top: 60px; border-bottom: 1px solid #ccc; }
.crop-top { top: 102px; border-top: 1px solid #ccc; }
.anchor { position: absolute; right: 0; top: 0; width: 5px; height: 5px; background: #9a9a9a; }
.page-body { padding: 17px 0 0 74px; font: 15px/18px "Liberation Serif", "Times New Roman", serif; color: #1a1208; }
.page-body p { margin: 0; }
.page-body .blue { color: #2222f0; }
.orange { display: inline-block; background: #ff8000; }
.page-body .hand { margin-top: 15px; font: 300 27px/34px "Bradley Hand ITC", Lato, sans-serif; color: #222; }
.hand span { text-decoration: underline wavy #e23b3b 1px; text-decoration-skip-ink: none; text-underline-offset: 1px; }

.scrollbar { width: 10px; display: flex; flex-direction: column; }
.scrollbar button { height: 9px; }
.scrollbar svg { width: 8px; height: 8px; }
.track { flex: 1; }
.thumb { height: 41%; margin-left: 1px; background: #cdcdcd; }
.sidebar { position: relative; width: 25px; display: flex; flex-direction: column; border-left: 1px solid #cfcfcf; padding-right: 3px; padding-left: 5px; }
.sidebar button { height: 19px; }
.sidebar svg { width: 12px; height: 12px; }
.sidebar button:first-of-type { height: 13px; }
.handle { position: absolute; left: -1px; top: 46%; width: 4px; height: 39px; background: #4a4a4a; display: flex; align-items: center; }
.sidebar .handle svg { width: 4px; height: 8px; }

/* Status bar */
.statusbar {
  display: flex;
  align-items: center;
  height: 12px;
  border-top: 1px solid #d4d4d4;
  background: #f0f0f0;
  white-space: nowrap;
}
.statusbar span + span { border-left: 1px solid #dcdcdc; }
.statusbar svg { height: 9px; width: 100%; }
.st-save { width: 18px; padding: 0 4px; }
.statusbar .st-page { width: 119px; padding-left: 4px; border: 0; }
.st-words { width: 188px; padding-left: 4px; }
.st-gap { width: 25px; height: 9px; }
.st-gap.wide { width: 37px; }
.st-style { width: 148px; padding-left: 4px; }
.st-lang { flex: 1; text-align: center; }
.st-mode { width: 25px; padding: 0 6px; }
.st-sign { width: 16px; height: 9px; }
.st-outline { width: 168px; text-align: center; }
.st-views { width: 48px; }
.st-zoom { width: 76px; padding: 0 11px; }
.st-pct { width: 27px; text-align: center; }

/* Taskbar */
.taskbar { display: flex; height: 21px; background: #04454f; color: #fff; }
.apps { flex: 1; display: grid; grid-template-columns: repeat(27, minmax(0, 1fr)); }
.apps button { height: 21px; border-bottom: 1px solid transparent; }
.apps svg { width: 13px; height: 13px; }
.apps .open { border-bottom-color: #7fd2dc; }
.apps .active { background: #15808e; }
.tray { display: flex; align-items: center; justify-content: flex-end; width: 318px; padding-right: 6px; }
.tray-icons { display: flex; gap: 3px; }
.tray-icons svg { width: 10px; height: 10px; }
.clock { width: 40px; text-align: center; line-height: 9px; }
.notify { position: relative; width: 20px; height: 20px; }
.notify svg { width: 14px; height: 14px; }
.notify span { position: absolute; right: 6px; bottom: 4px; line-height: 7px; }
```
